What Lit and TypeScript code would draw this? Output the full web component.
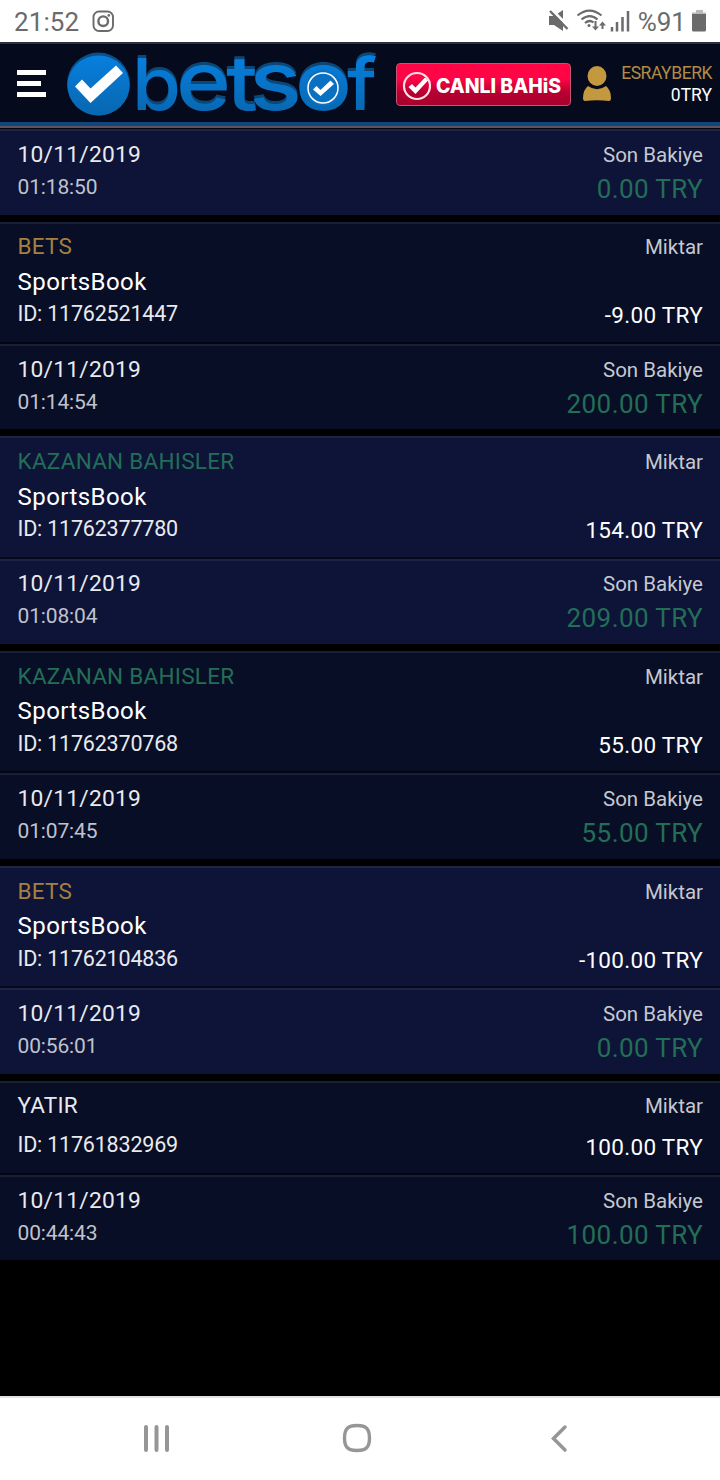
import { LitElement, html, css, svg } from "lit";
import { customElement, property } from "lit/decorators.js";

interface Entry {
  kind?: string;
  tone?: string;
  title?: string;
  id?: string;
  amount?: string;
  time: string;
  balance: string;
}

const ENTRIES: Entry[] = [
  { time: "01:18:50", balance: "0.00 TRY" },
  { kind: "BETS", tone: "gold", title: "SportsBook", id: "11762521447", amount: "-9.00 TRY", time: "01:14:54", balance: "200.00 TRY" },
  { kind: "KAZANAN BAHISLER", tone: "green", title: "SportsBook", id: "11762377780", amount: "154.00 TRY", time: "01:08:04", balance: "209.00 TRY" },
  { kind: "KAZANAN BAHISLER", tone: "green", title: "SportsBook", id: "11762370768", amount: "55.00 TRY", time: "01:07:45", balance: "55.00 TRY" },
  { kind: "BETS", tone: "gold", title: "SportsBook", id: "11762104836", amount: "-100.00 TRY", time: "00:56:01", balance: "0.00 TRY" },
  { kind: "YATIR", tone: "plain", id: "11761832969", amount: "100.00 TRY", time: "00:44:43", balance: "100.00 TRY" },
];

// Logo letters: character, left edge, target width, font size.
const LETTERS: [string, number, number, number][] = [
  ["b", 132, 49, 72],
  ["e", 176, 55, 81],
  ["t", 226, 32, 76],
  ["s", 249, 53, 81],
  ["o", 295, 57, 81],
  ["f", 347, 30, 72],
];

@customElement("status-bar")
class StatusBar extends LitElement {
  static styles = css`
    :host { display: block; height: 42px; background: #fff; font-family: Roboto, sans-serif; color: #6b6b6b; }
    .bar { display: flex; justify-content: space-between; height: 42px; }
    .side { display: flex; align-items: center; }
    .left { padding-left: 14px; gap: 13px; }
    .time { font-size: 26px; line-height: 42px; letter-spacing: 0.1px; padding-top: 1px; }
    .pct { font-size: 26px; line-height: 42px; padding-top: 1px; }
  `;
  render() {
    return html`<div class="bar">
      <div class="side left">
        <span class="time">21:52</span>
        <svg width="22" height="22" viewBox="0 0 22 22" fill="none" stroke="#6b6b6b">
          <rect x="1.500" y="1.500" width="19.500" height="19.500" rx="5.5" stroke-width="1.900" />
          <circle cx="11.200" cy="11.200" r="4.800" stroke-width="2.4" />
          <circle cx="16.8" cy="5.4" r="1.3" fill="#6b6b6b" stroke="none" />
        </svg>
      </div>
      <div class="side">
        <svg width="90" height="42" viewBox="548 0 90 42" fill="none" stroke="#6b6b6b">
          <path d="M549 16h5l9 -6v21l-9-6h-5z" fill="#6b6b6b" stroke="none" />
          <path d="M551 9 569 27" stroke="#fff" stroke-width="3" />
          <path d="M550 11 567.500 29" stroke-width="2.4" />
          <path d="M577.5 15.500c8-6.500 16-6.500 24 0M581.5 19.500c5.500-4.500 11-4.500 16 0M585 23c3-2.500 6-2.500 8.500-.500" stroke-width="2.2" />
          <circle cx="589" cy="25.500" r="1.500" fill="#6b6b6b" stroke="none" />
          <path d="M595.500 21v7M602.500 29v-6" stroke-width="2" />
          <path d="M592 26.500h7l-3.500 4zM599 25.500h7l-3.500-4z" fill="#6b6b6b" stroke="none" />
          <path d="M612 27v4.500M617 22v9.500M622.500 17v14.500M628 11v20.500" stroke-width="2.500" />
        </svg>
        <span class="pct">%91</span>
        <svg width="34" height="42" viewBox="686 0 34 42">
          <path d="M696 10h7v3h-7z" fill="#bbb" />
          <path d="M692 12.500h14v4h-14z" fill="#bbb" />
          <path d="M692 14h14v16q0 1.500-1.500 1.500h-11q-1.500 0-1.500-1.500z" fill="#6b6b6b" />
        </svg>
      </div>
    </div>`;
  }
}

@customElement("site-header")
class SiteHeader extends LitElement {
  static styles = css`
    :host { display: block; font-family: Roboto, sans-serif; }
    .head { box-sizing: border-box; height: 80px; display: flex; background: #050a1c; border-top: 2px solid #2b2f3e; }
    .lines { height: 7px; background: linear-gradient(#10467d 0 4px, #60515f 4px 6px, #05050c 6px); }
    .logo { flex: none; display: block; overflow: visible; }
    .word { filter: drop-shadow(0 -3px 0 #0b4878); }
    .live { flex: none; margin: 19px 0 0 16px; box-sizing: border-box; width: 175px; height: 43px; border-radius: 4px; border: 1px solid #c85272; background: linear-gradient(#ff0546 0 35%, #b60031 70%, #a8002c); display: flex; align-items: center; color: #fff; padding-left: 5px; }
    .user { flex: none; margin: 21px 0 0 12px; }
    .who { flex: 1; text-align: right; padding: 18px 8px 0 0; font-size: 17.5px; line-height: 22px; color: #fff; }
    .name { color: #b08c46; letter-spacing: -0.45px; }
  `;
  render() {
    return html`<div class="head">
        <svg class="logo" width="380" height="78" viewBox="0 44 380 78">
          <defs>
            <linearGradient id="g" gradientUnits="userSpaceOnUse" x1="0" y1="54" x2="0" y2="114">
              <stop offset="0" stop-color="#0780e0" /><stop offset="1" stop-color="#0867b0" />
            </linearGradient>
          </defs>
          <path d="M17 70h29v5H17zM17 81h24v5H17zM17 92h29v5H17z" fill="#fff" />
          <circle cx="98.500" cy="84" r="31.500" fill="#0b4f8a" />
          <ellipse cx="98.500" cy="85.500" rx="31" ry="30" fill="url(#g)" />
          <path d="M75 86.500 82 79.500 90.500 88.500 116 65.500 123 73 90.500 103z" fill="#fff" />
          <g class="word">
            ${LETTERS.map(([c, x, w, s]) => svg`<text x=${x} y="110"
              font-family="Inter, sans-serif" font-weight="500" font-size=${s} textLength=${w}
              lengthAdjust="spacingAndGlyphs" fill="url(#g)">${c}</text>`)}
          </g>
          <circle cx="323" cy="88" r="18" fill="#0970c2" />
          <circle cx="323" cy="88" r="15" fill="none" stroke="#fff" stroke-width="1.500" />
          <path d="M313 89.500 316.500 86 320.500 90 330.500 80.500 334 84 320.500 96z" fill="#fff" />
        </svg>
        <div class="live">
          <svg width="168" height="41" viewBox="0 0 168 41">
            <circle cx="15" cy="22" r="13" fill="none" stroke="#ffe0e9" stroke-width="2.200" />
            <path d="M6.500 23 10 20 13.500 23.500 23 13.500 26 16.500 13.500 30z" fill="#fff" />
            <text x="34" y="28.500" font-family="Inter, sans-serif" font-weight="800" font-size="20" fill="#fff" textLength="125" lengthAdjust="spacingAndGlyphs">CANLI BAHiS</text>
          </svg>
        </div>
        <svg class="user" width="28" height="38" viewBox="0 0 28 38" fill="#c3983f">
          <ellipse cx="14" cy="11" rx="9.500" ry="10" />
          <path d="M5 21q9 6.500 18 0 5 4 5 12 0 3-2 3-12-1.500-24 0-2 0-2-3 0-8 5-12z" />
        </svg>
        <div class="who"><div class="name">ESRAYBERK</div><div>0TRY</div></div>
      </div>
      <div class="lines"></div>`;
  }
}

@customElement("entry-card")
class EntryCard extends LitElement {
  @property({ attribute: false }) entry!: Entry;
  @property({ type: Boolean, reflect: true }) light = false;
  static styles = css`
    :host { display: block; background: #080e25; color: #e9eaee; font-family: Roboto, sans-serif; letter-spacing: 0.3px; margin-bottom: 7px; }
    :host([light]) { background: #0d1438; }
    .sec { box-sizing: border-box; display: flex; justify-content: space-between; padding: 0 17px 0 17.500px; border-top: 2px solid rgba(255, 255, 255, 0.07); }
    .top { height: 122.250px; border-bottom: 2px solid rgba(0, 0, 0, 0.5); }
    .top.short { height: 94.250px; }
    .bottom { height: 85.500px; }
    .col { display: flex; flex-direction: column; }
    .right { align-items: flex-end; }
    .kind { font-size: 22.500px; line-height: 26px; margin-top: 9.750px; letter-spacing: 0.26px; }
    .gold { color: #a5803f; }
    .green { color: #236e56; }
    .title { font-size: 24px; line-height: 28px; margin-top: 8.500px; color: #fff; letter-spacing: 0.45px; }
    .id { font-size: 21.500px; line-height: 25px; margin-top: 5.500px; letter-spacing: -0.200px; }
    .short .id { margin-top: 13.750px; }
    .label { font-size: 20.500px; line-height: 24px; margin-top: 11.750px; color: #c6c8d0; letter-spacing: 0; }
    .amount { font-size: 22.500px; line-height: 26px; margin-top: 43px; color: #fff; letter-spacing: 0.3px; }
    .short .amount { margin-top: 15.250px; }
    .date { font-size: 22.800px; line-height: 26px; margin-top: 10.750px; letter-spacing: 0.22px; }
    .time { font-size: 21px; line-height: 24px; margin-top: 7px; color: #c0c2cc; letter-spacing: -0.15px; }
    .bal { font-size: 26px; line-height: 30px; margin-top: 7px; color: #236e56; letter-spacing: 0.4px; }
  `;
  render() {
    const e = this.entry;
    return html`${e.kind
        ? html`<div class="sec top ${e.title ? "" : "short"}">
            <div class="col">
              <span class="kind ${e.tone}">${e.kind}</span>
              ${e.title ? html`<span class="title">${e.title}</span>` : ""}
              <span class="id">ID: ${e.id}</span>
            </div>
            <div class="col right"><span class="label">Miktar</span><span class="amount">${e.amount}</span></div>
          </div>`
        : ""}
      <div class="sec bottom">
        <div class="col"><span class="date">10/11/2019</span><span class="time">${e.time}</span></div>
        <div class="col right"><span class="label">Son Bakiye</span><span class="bal">${e.balance}</span></div>
      </div>`;
  }
}

@customElement("nav-bar")
class NavBar extends LitElement {
  static styles = css`
    :host { display: block; box-sizing: border-box; height: 84px; background: #fff; border-top: 2px solid #e2e2e2; }
    .icons { display: flex; align-items: center; padding-left: 142px; height: 80px; }
    .home { margin-left: 171px; }
    .back { margin-left: 177.500px; }
  `;
  render() {
    return html`<div class="icons">
      <svg width="29" height="30" viewBox="0 0 29 30" stroke="#969696" stroke-width="4" stroke-linecap="round"><path d="M4 4v23M14.500 4v23M25 4v23" /></svg>
      <svg class="home" width="30" height="30" viewBox="0 0 30 30" fill="none" stroke="#969696" stroke-width="3.400"><path d="M15 2.500C24 2.500 27.500 5.500 27.500 15S24 27.500 15 27.500 2.500 24.500 2.500 15 6 2.500 15 2.500z" /></svg>
      <svg class="back" width="20" height="30" viewBox="0 0 20 30" fill="none" stroke="#969696" stroke-width="3.500" stroke-linecap="round"><path d="M15 4 3.500 15.500 15 27" /></svg>
    </div>`;
  }
}

@customElement("app-root")
class AppRoot extends LitElement {
  static styles = css`
    :host { display: flex; flex-direction: column; width: 720px; height: 1480px; background: #000; overflow: hidden; }
    .list { flex: 1; }
  `;
  render() {
    return html`<status-bar></status-bar>
      <site-header></site-header>
      <div class="list">${ENTRIES.map((e, i) => html`<entry-card .entry=${e} ?light=${i % 2 === 0}></entry-card>`)}</div>
      <nav-bar></nav-bar>`;
  }
}
